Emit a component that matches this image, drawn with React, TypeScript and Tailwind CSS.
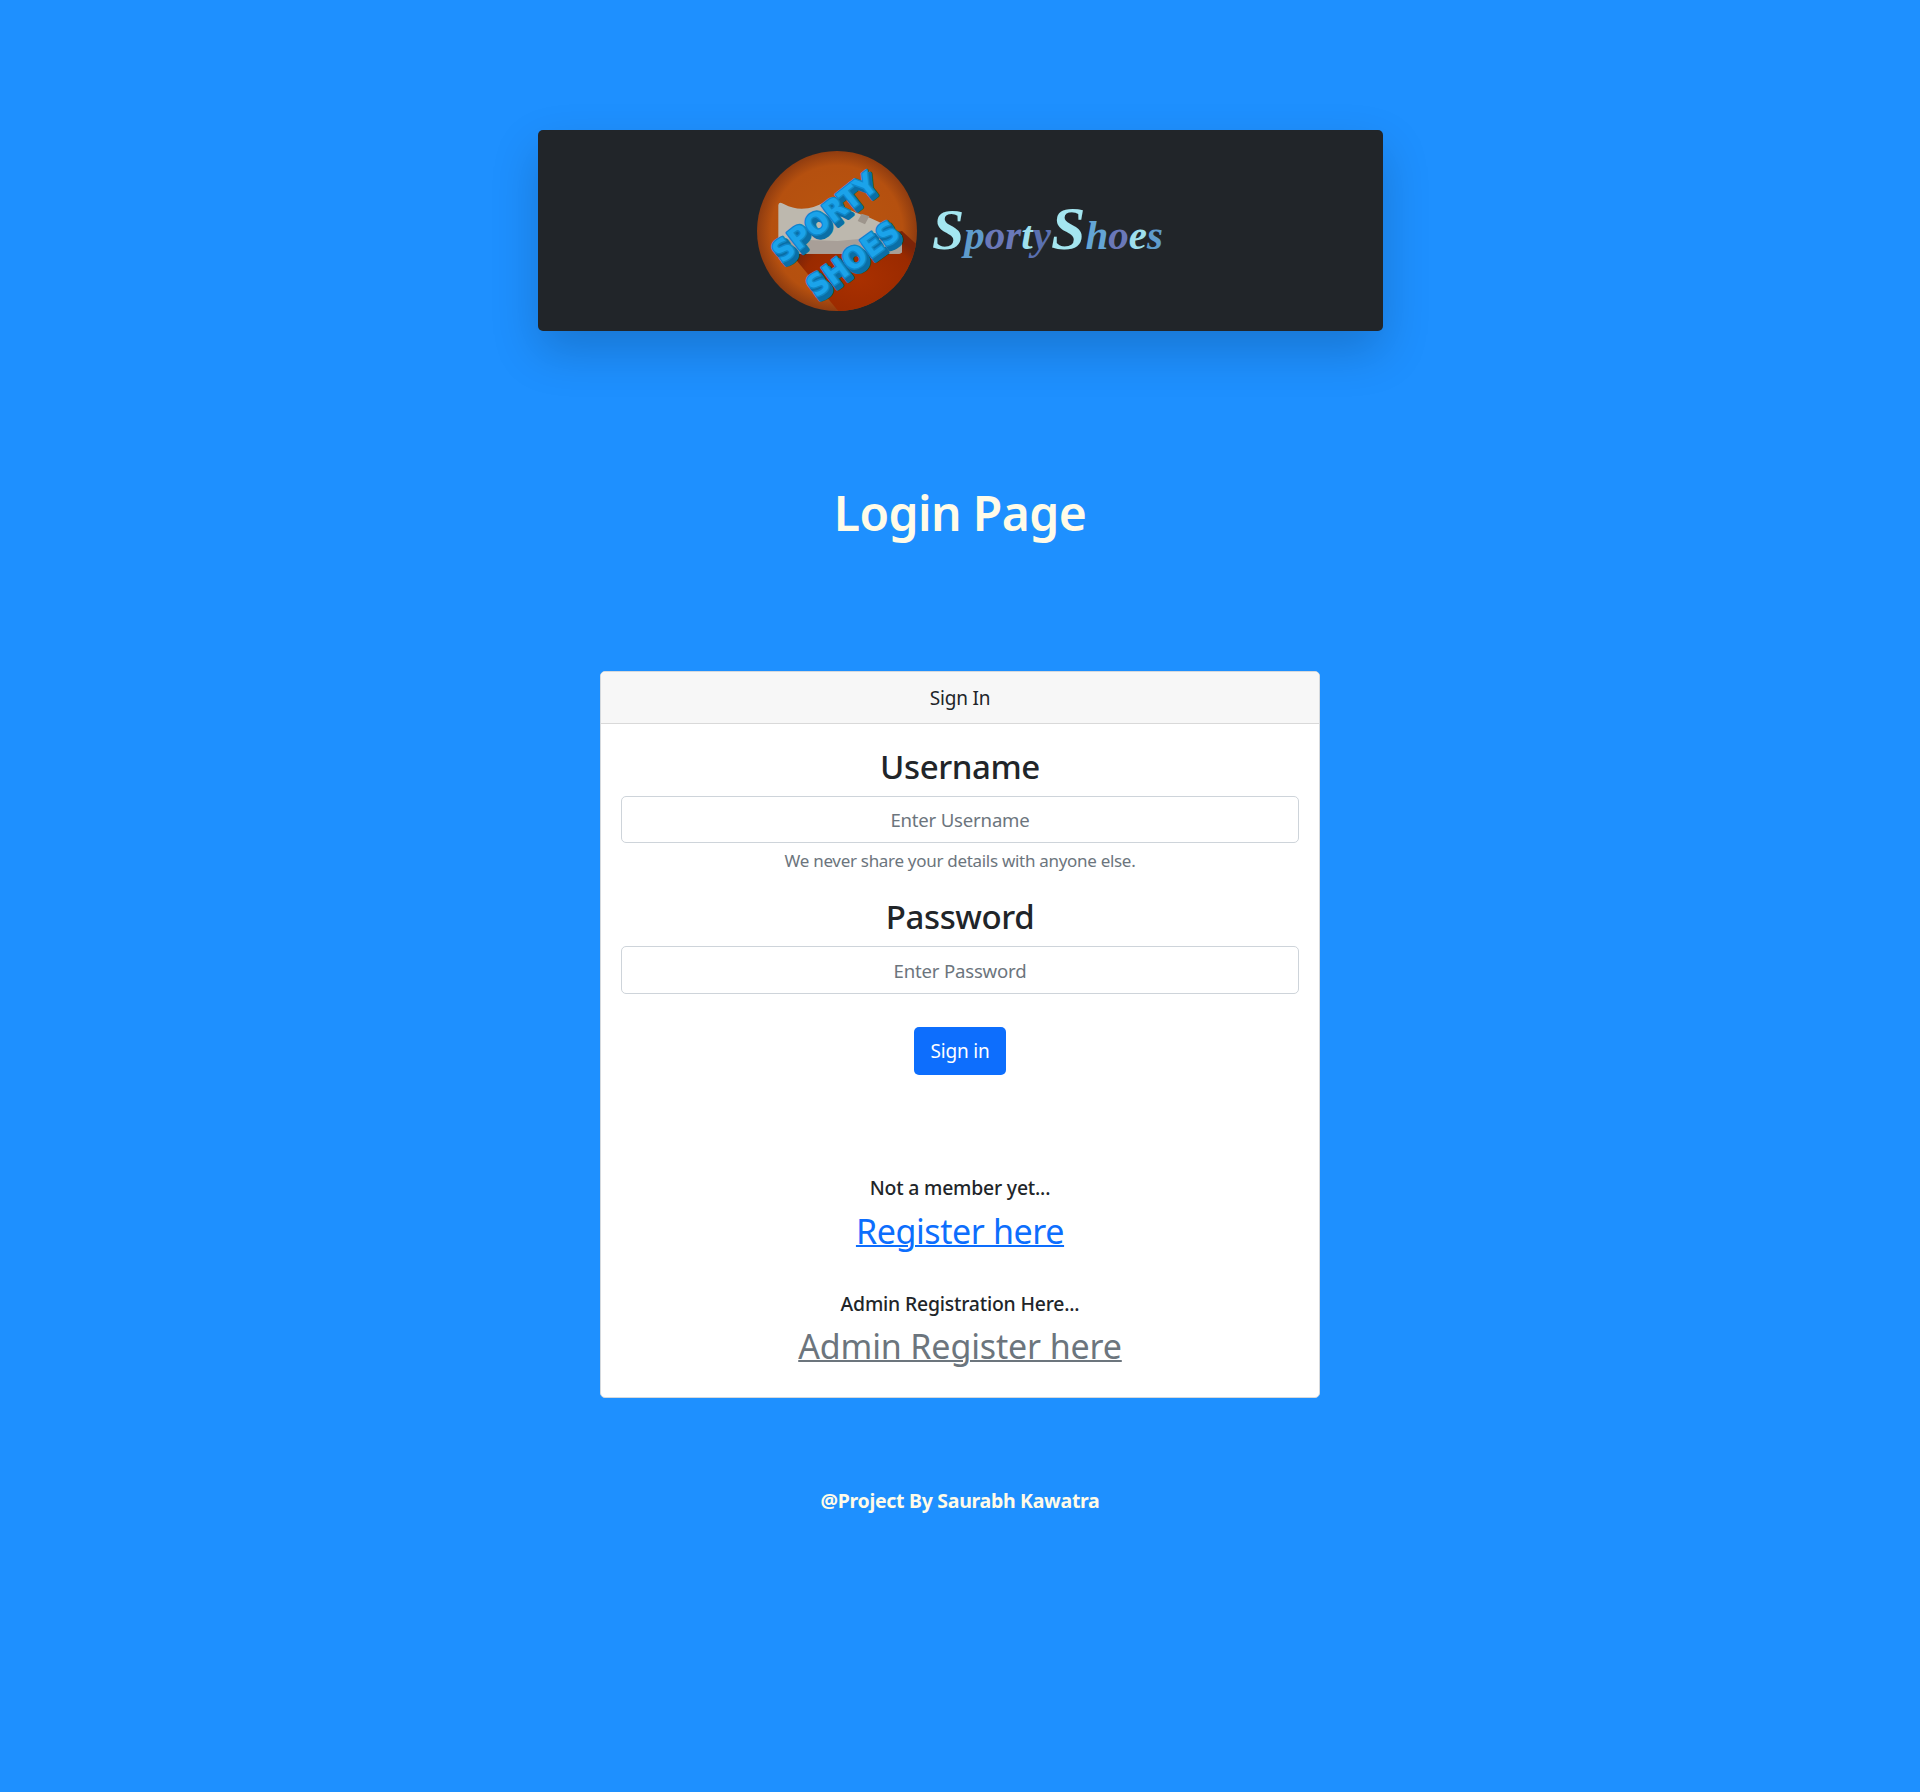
const letters: [string, string, string][] = [
  ["S", "#a4e6f0", "text-[58px]"],
  ["p", "#5f9ccc", "text-[41px]"],
  ["o", "#6a78b8", "text-[41px]"],
  ["r", "#6a78b8", "text-[41px]"],
  ["t", "#9fe0ee", "text-[41px]"],
  ["y", "#5a70b0", "text-[41px]"],
  ["S", "#a4e6f0", "text-[62px]"],
  ["h", "#63a5d5", "text-[41px]"],
  ["o", "#6a78b8", "text-[41px]"],
  ["e", "#9fe0ee", "text-[41px]"],
  ["s", "#5f9ccc", "text-[41px]"],
];

function Badge() {
  const fontFamily = "'DejaVu Sans', sans-serif";
  const word = (
    label: string,
    x: number,
    y: number,
    len: number,
    angle: number,
    fill: string,
    stroke: string,
    sw: number,
  ) => (
    <text
      x={x}
      y={y}
      transform={`rotate(${angle} ${x} ${y})`}
      textLength={len}
      lengthAdjust="spacingAndGlyphs"
      fontFamily={fontFamily}
      fontWeight="700"
      fontSize="88"
      fill={fill}
      stroke={stroke}
      strokeWidth={sw}
      strokeLinejoin="round"
      paintOrder="stroke"
    >
      {label}
    </text>
  );
  return (
    <svg viewBox="48 30 480 480" className="h-[160px] w-[160px] shrink-0 overflow-visible">
      <defs>
        <radialGradient id="disc" cx="50%" cy="50%" r="50%">
          <stop offset="0%" stopColor="#b9560f" />
          <stop offset="82%" stopColor="#b5500f" />
          <stop offset="100%" stopColor="#8f3c10" />
        </radialGradient>
        <radialGradient id="rim" cx="50%" cy="50%" r="50%">
          <stop offset="0%" stopColor="#a93000" />
          <stop offset="80%" stopColor="#9a2a00" />
          <stop offset="100%" stopColor="#7c2408" />
        </radialGradient>
        <clipPath id="circle">
          <circle cx="288" cy="270" r="240" />
        </clipPath>
      </defs>
      <circle cx="288" cy="270" r="240" fill="url(#disc)" />
      <g clipPath="url(#circle)">
        <path d="M150 338 L483 270 L560 340 L340 560 L300 520 Z" fill="url(#rim)" />
      </g>
      <path
        d="M112 192 Q114 180 130 190 Q190 222 262 177 L345 215 Q420 238 472 280 Q483 288 483 330 Q483 338 472 338 L122 338 Q112 338 112 328 Z"
        fill="#bdb8ae"
      />
      <path
        d="M112 294 L290 300 L483 282 L483 330 Q483 338 472 338 L122 338 Q112 338 112 328 Z"
        fill="#a89f98"
      />
      <path d="M350 240 L362 218 L385 226 L372 250 Z" fill="#9d958c" />
      <g>
        {word("SPORTY", 133, 378, 372, -38, "#0a6ea6", "#0a6ea6", 13)}
        {word("SHOES", 235, 482, 318, -36, "#0a6ea6", "#0a6ea6", 13)}
        {word("SPORTY", 123, 368, 372, -38, "#1ba3ea", "#0f86c8", 9)}
        {word("SHOES", 225, 472, 318, -36, "#1ba3ea", "#0f86c8", 9)}
      </g>
    </svg>
  );
}

function Wordmark() {
  return (
    <div
      className="flex items-baseline pb-[5px] italic font-bold leading-none"
      style={{ fontFamily: "'Liberation Serif', serif" }}
    >
      {letters.map(([ch, color, size], i) => (
        <span key={i} className={size} style={{ color }}>
          {ch}
        </span>
      ))}
    </div>
  );
}

export default function App() {
  return (
    <div
      className="flex min-h-[1792px] flex-col items-center bg-[#1e90ff] pt-[130px] text-center text-[19.6px] leading-[1.5] text-[#212529]"
      style={{ fontFamily: "'Noto Sans', 'Open Sans', sans-serif" }}
    >
      <nav className="flex h-[201px] w-[845px] items-center justify-center gap-[15px] rounded-[5px] bg-[#212529] shadow-[0_20px_48px_rgba(0,0,0,0.18)]">
        <Badge />
        <Wordmark />
      </nav>

      <h1 className="mt-[153px] text-[48px] font-semibold leading-[1.2] tracking-[-0.6px] text-[#fffbe8]">
        Login Page
      </h1>

      <main className="mt-[129px] flex h-[727px] w-[720px] flex-col overflow-hidden rounded-[5px] border border-[#d5d9dd] bg-white">
        <div className="flex h-[52px] shrink-0 items-center justify-center border-b border-[#d9d9d9] bg-[#f7f7f7] pt-[2px] text-[19px] tracking-[-0.2px]">
          Sign In
        </div>
        <form className="flex flex-col items-stretch px-[20px] pt-[23px]">
          <label className="text-[33px] font-medium leading-[1.2] tracking-[-0.4px]">Username</label>
          <input
            placeholder="Enter Username"
            className="mt-[10px] h-[47px] rounded-[5px] border border-[#ced4da] bg-white text-center text-[18.6px] tracking-[-0.2px] placeholder:text-[#6c757d]"
          />
          <p className="mt-[5px] text-[17px] tracking-[-0.3px] text-[#6c757d]">We never share your details with anyone else.</p>
          <label className="mt-[23px] text-[33px] font-medium leading-[1.2] tracking-[-0.4px]">Password</label>
          <input
            placeholder="Enter Password"
            className="mt-[10px] h-[48px] rounded-[5px] border border-[#ced4da] bg-white text-center text-[18.6px] tracking-[-0.2px] placeholder:text-[#6c757d]"
          />
          <button
            type="button"
            className="mx-auto mt-[33px] h-[48px] w-[92px] rounded-[5px] bg-[#0d6efd] text-[19px] tracking-[-0.2px] text-white"
          >
            Sign in
          </button>
        </form>
        <div className="mt-[99px] flex flex-col items-center">
          <p className="text-[19.4px] font-medium leading-[27px] tracking-[-0.2px]">Not a member yet...</p>
          <a href="#" className="mt-[7px] text-[34px] leading-[46px] tracking-[-0.4px] text-[#0d6efd] underline decoration-2">
            Register here
          </a>
          <p className="mt-[36px] text-[19.4px] font-medium leading-[27px] tracking-[-0.2px]">Admin Registration Here...</p>
          <a href="#" className="mt-[6px] text-[34px] leading-[46px] tracking-[-0.15px] text-[#6c757d] underline decoration-2">
            Admin Register here
          </a>
        </div>
      </main>

      <p className="mt-[88px] text-[19.5px] font-bold tracking-[-0.3px] text-[#fffbe8]">@Project By Saurabh Kawatra</p>
    </div>
  );
}
